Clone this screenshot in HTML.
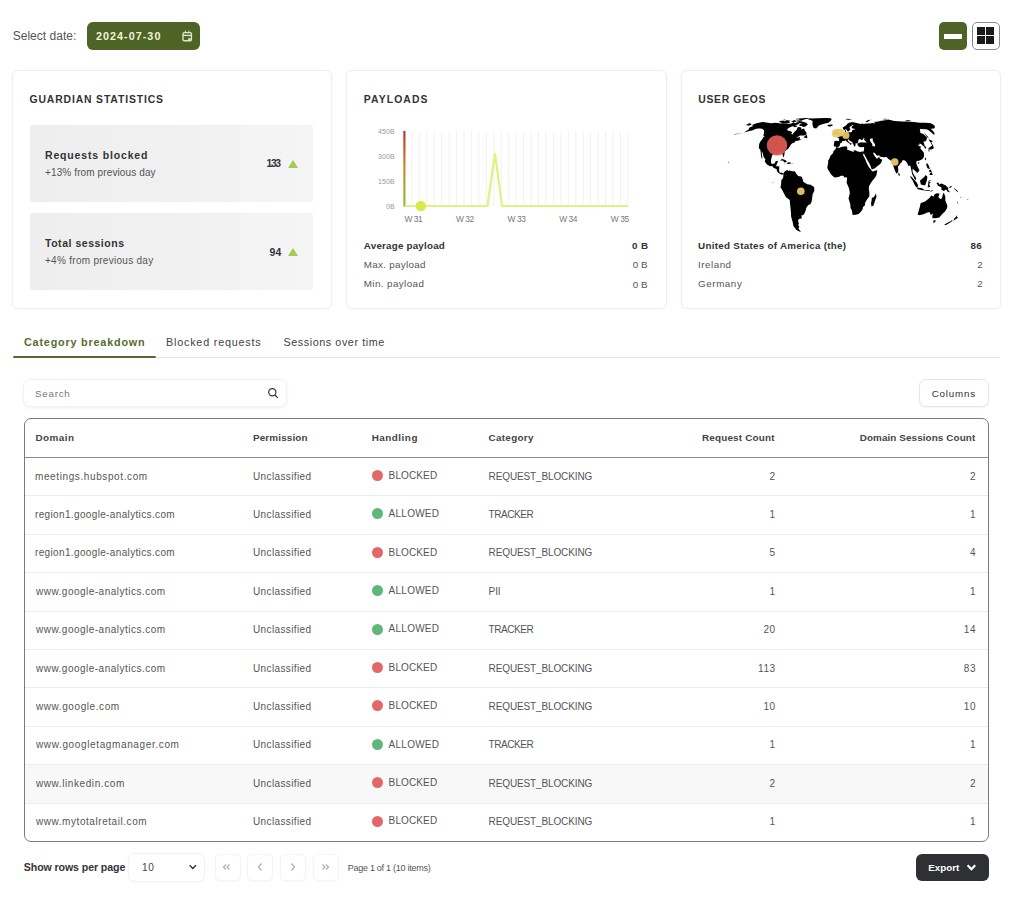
<!DOCTYPE html>
<html>
<head>
<meta charset="utf-8">
<title>Dashboard</title>
<style>
html,body{margin:0;padding:0;background:#fff;width:1024px;height:914px;overflow:hidden;position:relative;font-family:"Liberation Sans", sans-serif;}
.t{position:absolute;white-space:nowrap;line-height:20px;height:20px;}
.abs{position:absolute;box-sizing:border-box;}
.datebtn{left:87px;top:22px;width:113px;height:28px;background:#4e6426;border-radius:6px;}
.vbtn1{left:939px;top:22px;width:27.5px;height:27.5px;background:#4e6426;border-radius:5px;}
.vbtn1 i{position:absolute;left:5px;top:11.5px;width:18px;height:5.5px;background:#fff;}
.vbtn2{left:972px;top:22px;width:27.5px;height:27.5px;border:1.3px solid #8a8a8a;border-radius:5px;background:#fff;}
.vbtn2 i{position:absolute;width:8px;height:8px;background:#1a1a1a;}
.card{top:69.5px;height:239px;border:1px solid #efefef;border-radius:6px;background:#fff;box-shadow:0 0 2px 1px rgba(0,0,0,0.025);}
.stat{left:30px;width:283px;height:77px;background:linear-gradient(90deg,#eeeeee 0%,#f1f1f1 55%,#f5f5f5 100%);border-radius:2px;}
.tri{position:absolute;width:0;height:0;border-left:5.5px solid transparent;border-right:5.5px solid transparent;border-bottom:8px solid #a3cb55;}
.tabline{left:156px;top:356.5px;width:844px;height:1px;background:#e6e6e6;}
.tabact{left:13px;top:355.5px;width:143px;height:2.5px;background:#556b2f;border-radius:1px;}
.search{left:23px;top:379px;width:264px;height:28px;border:1px solid #f1f1f1;border-radius:7px;box-shadow:0 1px 3px rgba(0,0,0,0.06);background:#fff;}
.colbtn{left:918.5px;top:379px;width:70px;height:28px;border:1px solid #e6e6e6;border-radius:7px;box-shadow:0 1px 2px rgba(0,0,0,0.05);background:#fff;}
.table{left:24px;top:418px;width:965px;height:424px;border:1.2px solid #7a7a7a;border-radius:7px;background:#fff;overflow:hidden;}
.hsep{left:25px;top:456.5px;width:963px;height:1.2px;background:#8a8a8a;}
.rsep{position:absolute;left:25px;width:963px;height:1px;background:#ececec;}
.hover{left:25px;top:764.5px;width:963px;height:38px;background:#f8f8f8;}
.dot{position:absolute;left:371.8px;width:11px;height:11px;border-radius:50%;}
.dot.red{background:#e26868;}
.dot.grn{background:#5fb77a;}
.sel{left:128px;top:853px;width:77px;height:29px;border:1px solid #f3f3f3;border-radius:7px;box-shadow:0 1px 3px rgba(0,0,0,0.04);background:#fff;}
.pbtn{top:853.5px;width:26px;height:27px;border:1px solid #f4f4f4;border-radius:5px;box-shadow:0 1px 2px rgba(0,0,0,0.03);background:#fff;}
.export{left:916px;top:853.5px;width:72.5px;height:27px;background:#2e3033;border-radius:6px;}
svg{position:absolute;left:0;top:0;overflow:visible;}
</style>
</head>
<body>
<div class="abs datebtn"></div>
<svg width="1024" height="914" style="pointer-events:none">
  <!-- calendar icon -->
  <g fill="none" stroke="#dfe9c0" stroke-width="1.4">
    <rect x="183" y="32.6" width="8.4" height="8.1" rx="1.3"/>
    <line x1="183" y1="35.4" x2="191.4" y2="35.4"/>
    <line x1="185.4" y1="30.6" x2="185.4" y2="32.4" stroke-width="1"/>
    <line x1="188.9" y1="30.6" x2="188.9" y2="32.4" stroke-width="1"/>
  </g>
  <rect x="188.1" y="38.2" width="2.6" height="2" fill="#dfe9c0"/>
</svg>
<div class="abs vbtn1"><i></i></div>
<div class="abs vbtn2"><i style="left:3.6px;top:3.6px"></i><i style="left:13.2px;top:3.6px"></i><i style="left:3.6px;top:13.2px"></i><i style="left:13.2px;top:13.2px"></i></div>

<div class="abs card" style="left:11.5px;width:320.5px"></div>
<div class="abs card" style="left:346px;width:320.5px"></div>
<div class="abs card" style="left:680.8px;width:320px"></div>

<div class="abs stat" style="top:125px"></div>
<div class="abs stat" style="top:212.5px"></div>
<div class="tri" style="left:288px;top:159.5px"></div>
<div class="tri" style="left:288px;top:248px"></div>

<svg width="1024" height="914">
  <defs>
    <linearGradient id="axg" gradientUnits="userSpaceOnUse" x1="0" y1="131" x2="0" y2="206">
      <stop offset="0" stop-color="#b03a2e"/>
      <stop offset="0.45" stop-color="#c9862f"/>
      <stop offset="1" stop-color="#8cc43c"/>
    </linearGradient>
  </defs>
  <line x1="411.8" y1="131" x2="411.8" y2="206" stroke="#f2f2f2" stroke-width="1"/><line x1="419.3" y1="131" x2="419.3" y2="206" stroke="#f2f2f2" stroke-width="1"/><line x1="426.8" y1="131" x2="426.8" y2="206" stroke="#f2f2f2" stroke-width="1"/><line x1="434.2" y1="131" x2="434.2" y2="206" stroke="#f2f2f2" stroke-width="1"/><line x1="441.6" y1="131" x2="441.6" y2="206" stroke="#f2f2f2" stroke-width="1"/><line x1="449.1" y1="131" x2="449.1" y2="206" stroke="#f2f2f2" stroke-width="1"/><line x1="456.5" y1="131" x2="456.5" y2="206" stroke="#f2f2f2" stroke-width="1"/><line x1="464.0" y1="131" x2="464.0" y2="206" stroke="#f2f2f2" stroke-width="1"/><line x1="471.4" y1="131" x2="471.4" y2="206" stroke="#f2f2f2" stroke-width="1"/><line x1="478.9" y1="131" x2="478.9" y2="206" stroke="#f2f2f2" stroke-width="1"/><line x1="486.3" y1="131" x2="486.3" y2="206" stroke="#f2f2f2" stroke-width="1"/><line x1="493.8" y1="131" x2="493.8" y2="206" stroke="#f2f2f2" stroke-width="1"/><line x1="501.2" y1="131" x2="501.2" y2="206" stroke="#f2f2f2" stroke-width="1"/><line x1="508.7" y1="131" x2="508.7" y2="206" stroke="#f2f2f2" stroke-width="1"/><line x1="516.1" y1="131" x2="516.1" y2="206" stroke="#f2f2f2" stroke-width="1"/><line x1="523.6" y1="131" x2="523.6" y2="206" stroke="#f2f2f2" stroke-width="1"/><line x1="531.0" y1="131" x2="531.0" y2="206" stroke="#f2f2f2" stroke-width="1"/><line x1="538.5" y1="131" x2="538.5" y2="206" stroke="#f2f2f2" stroke-width="1"/><line x1="546.0" y1="131" x2="546.0" y2="206" stroke="#f2f2f2" stroke-width="1"/><line x1="553.4" y1="131" x2="553.4" y2="206" stroke="#f2f2f2" stroke-width="1"/><line x1="560.9" y1="131" x2="560.9" y2="206" stroke="#f2f2f2" stroke-width="1"/><line x1="568.3" y1="131" x2="568.3" y2="206" stroke="#f2f2f2" stroke-width="1"/><line x1="575.8" y1="131" x2="575.8" y2="206" stroke="#f2f2f2" stroke-width="1"/><line x1="583.2" y1="131" x2="583.2" y2="206" stroke="#f2f2f2" stroke-width="1"/><line x1="590.6" y1="131" x2="590.6" y2="206" stroke="#f2f2f2" stroke-width="1"/><line x1="598.1" y1="131" x2="598.1" y2="206" stroke="#f2f2f2" stroke-width="1"/><line x1="605.5" y1="131" x2="605.5" y2="206" stroke="#f2f2f2" stroke-width="1"/><line x1="613.0" y1="131" x2="613.0" y2="206" stroke="#f2f2f2" stroke-width="1"/><line x1="620.5" y1="131" x2="620.5" y2="206" stroke="#f2f2f2" stroke-width="1"/><line x1="627.9" y1="131" x2="627.9" y2="206" stroke="#f2f2f2" stroke-width="1"/>
  <line x1="404.4" y1="131" x2="404.4" y2="206.5" stroke="url(#axg)" stroke-width="2.2"/>
  <polyline points="405,206 487.5,206 495,153.5 502,206 628,206" fill="none" stroke="#e1f182" stroke-width="2.2" stroke-linejoin="miter"/>
  <circle cx="420.8" cy="206" r="5.2" fill="#d7ec4a"/>
  <path d="M752.1,125.1 L755.6,123.6 L759.9,122.6 L762.8,122.1 L764.8,122.3 L766.4,122.6 L769.3,122.9 L771.4,123.3 L775.1,122.7 L777.3,123.0 L780.7,123.5 L783.9,123.8 L788.7,124.0 L791.3,123.5 L793.8,122.0 L794.6,123.3 L797.6,122.7 L799.1,123.0 L799.0,123.8 L797.8,124.6 L795.2,125.2 L794.0,126.1 L791.9,126.4 L788.4,127.9 L787.2,129.4 L787.5,130.6 L789.6,131.0 L792.1,132.0 L791.3,133.9 L792.4,134.6 L793.9,132.4 L796.5,129.9 L797.8,127.1 L800.4,127.3 L801.6,127.9 L801.0,129.4 L804.1,128.4 L804.9,130.6 L806.0,132.0 L806.8,134.1 L804.4,135.4 L800.0,135.6 L795.9,138.1 L800.1,136.9 L799.6,138.9 L801.7,139.3 L798.0,140.7 L795.4,141.0 L794.6,142.4 L791.9,143.5 L790.2,145.6 L788.7,148.3 L784.7,151.4 L784.3,155.6 L783.5,157.4 L782.6,155.1 L782.2,152.8 L778.8,152.6 L777.8,153.7 L775.2,153.2 L772.3,155.1 L771.3,158.4 L770.9,161.2 L771.2,163.2 L772.2,163.9 L774.8,163.3 L775.6,161.2 L778.2,160.8 L776.8,164.1 L776.1,166.2 L779.3,166.2 L779.1,170.9 L780.0,172.9 L781.9,172.4 L783.3,173.4 L783.4,174.1 L782.9,174.6 L781.0,174.6 L779.3,173.6 L777.4,171.9 L776.4,169.0 L773.7,168.0 L772.2,166.1 L770.0,166.2 L767.0,164.6 L764.8,161.7 L765.4,159.3 L763.6,157.0 L762.6,152.8 L761.7,151.2 L761.9,153.7 L762.3,158.4 L762.2,159.3 L761.3,157.4 L760.9,154.6 L760.8,153.0 L760.4,150.5 L760.1,149.2 L758.9,148.6 L758.9,146.1 L759.4,143.6 L760.4,141.4 L762.6,138.7 L763.4,137.0 L764.8,136.5 L763.3,135.4 L764.1,132.4 L764.1,130.6 L763.0,129.6 L762.2,128.8 L759.9,128.4 L758.0,128.6 L755.4,129.1 L752.2,130.6 L749.4,131.0 L745.9,132.0 L743.9,132.5 L748.6,129.6 L749.0,128.7 L749.0,128.0 L750.6,127.0 L752.9,126.2 L752.7,125.8Z M808.1,124.3 L805.5,126.4 L803.3,127.0 L801.7,126.1 L799.0,125.8 L800.0,124.0 L802.8,123.8 L798.9,123.0 L797.5,122.8 L795.8,122.0 L799.6,121.1 L802.1,121.6 L804.4,122.3 L806.6,122.7 L806.9,123.8Z M781.5,122.0 L783.5,121.2 L786.1,121.1 L789.0,121.1 L789.4,121.6 L789.9,122.5 L788.8,123.3 L786.4,123.4 L782.7,123.5 L780.9,123.1Z M778.5,121.9 L780.8,120.8 L783.8,120.7 L784.4,121.1 L781.7,121.9 L779.3,122.3Z M803.1,119.9 L798.4,119.9 L800.2,119.1 L799.6,118.4 L805.3,118.1 L811.5,118.1 L806.3,118.9 L804.0,119.4Z M801.9,120.7 L796.7,120.6 L796.7,120.0 L800.3,119.9 L802.5,120.0Z M793.5,121.9 L790.9,121.6 L792.1,120.9 L795.1,120.8 L796.8,121.0 L795.8,121.8Z M784.8,120.3 L786.2,119.9 L790.8,120.0 L789.7,120.5 L786.6,120.7Z M807.8,119.3 L810.7,118.5 L816.8,118.2 L825.4,118.0 L831.0,118.3 L831.6,119.7 L829.7,121.8 L828.5,122.7 L823.7,123.8 L818.9,125.5 L816.2,128.6 L813.7,127.9 L812.6,125.5 L812.4,123.0 L812.7,120.9 L810.4,120.1Z M827.4,125.2 L828.6,124.7 L832.2,124.6 L832.9,125.5 L830.4,126.4 L828.0,126.2Z M779.7,160.4 L782.0,159.1 L785.4,160.1 L787.0,162.0 L784.6,162.4 L782.8,160.6 L780.4,160.4Z M786.6,163.6 L788.2,162.3 L790.7,162.5 L790.9,163.6 L788.3,164.0Z M783.8,163.7 L785.3,163.9 L784.8,164.3 L784.0,163.9Z M791.8,163.6 L792.9,163.7 L792.7,164.1 L791.7,164.1Z M783.5,173.3 L784.9,171.2 L787.6,169.7 L788.0,170.9 L789.2,170.4 L791.9,171.3 L794.8,171.2 L796.1,173.4 L798.2,175.9 L801.8,176.8 L802.9,180.0 L803.2,181.8 L804.7,182.8 L807.3,184.3 L810.6,184.8 L814.1,186.9 L814.4,190.7 L812.7,194.1 L812.0,199.0 L811.5,201.9 L810.3,204.3 L808.3,205.0 L806.2,208.0 L805.6,210.8 L804.4,213.5 L803.1,215.3 L801.4,215.3 L801.8,218.4 L799.3,218.8 L797.9,220.5 L799.0,223.9 L797.9,225.1 L799.3,226.3 L798.5,228.6 L799.5,230.1 L801.0,231.8 L799.3,231.6 L796.5,230.1 L793.5,226.3 L792.7,222.2 L791.2,217.1 L790.8,210.8 L790.1,204.3 L789.7,200.0 L785.8,197.1 L784.0,193.6 L781.8,189.2 L780.4,187.2 L781.0,185.3 L781.2,182.8 L781.3,180.3 L783.1,178.0 L783.4,174.6Z M836.1,147.6 L839.3,147.7 L842.0,146.7 L846.6,146.3 L847.4,148.3 L846.9,149.4 L850.2,150.7 L853.7,152.1 L853.6,150.5 L855.3,150.3 L857.1,151.2 L859.9,152.0 L862.1,151.6 L863.5,151.6 L864.1,153.3 L863.2,154.6 L862.4,152.9 L863.3,155.6 L865.1,158.9 L866.6,162.7 L867.7,165.1 L868.8,167.0 L870.1,168.5 L871.5,170.3 L872.5,171.5 L875.7,170.6 L877.3,170.2 L877.2,171.5 L876.3,175.4 L874.9,177.8 L872.4,180.8 L870.5,183.6 L869.0,186.3 L868.8,189.2 L869.4,192.2 L869.3,196.6 L867.3,199.0 L865.1,202.8 L865.0,205.2 L863.0,206.9 L862.5,209.4 L860.9,211.7 L858.6,214.0 L856.9,214.4 L853.4,215.1 L852.3,214.4 L852.3,212.6 L851.7,209.9 L850.5,208.0 L850.3,204.3 L849.0,200.0 L848.5,198.5 L849.8,193.6 L849.5,190.7 L848.8,187.7 L846.6,182.8 L847.0,179.3 L847.1,177.8 L846.2,177.3 L844.4,177.5 L843.3,175.7 L841.1,175.8 L838.5,177.0 L834.5,177.4 L831.6,175.1 L830.1,172.9 L829.1,170.9 L827.9,169.5 L827.3,167.3 L828.2,162.7 L828.1,160.8 L829.4,158.4 L830.6,155.6 L833.1,153.3 L833.3,151.4 L835.4,149.2Z M875.9,193.6 L876.5,197.1 L875.6,199.0 L873.4,205.7 L871.5,206.6 L871.0,203.3 L871.7,200.0 L871.7,198.0 L874.0,197.1Z M834.0,146.5 L833.8,144.8 L834.4,141.4 L834.9,140.8 L838.9,141.0 L839.2,138.9 L838.5,137.9 L837.1,137.0 L839.1,136.8 L840.9,135.7 L842.4,134.8 L843.0,133.5 L844.7,133.0 L845.0,131.7 L844.7,130.6 L845.9,130.1 L846.1,132.4 L847.6,132.4 L850.5,132.2 L852.2,131.8 L852.0,130.6 L852.2,130.3 L853.5,129.7 L855.6,128.9 L852.7,128.6 L851.8,127.9 L851.6,126.7 L853.4,125.5 L852.5,125.0 L851.1,125.9 L849.7,127.0 L849.6,128.2 L850.6,128.9 L849.4,130.6 L848.1,131.7 L847.3,131.0 L846.8,129.9 L845.9,129.2 L844.5,129.9 L843.1,129.2 L842.7,127.6 L844.3,126.4 L846.3,125.2 L847.4,123.8 L849.0,122.7 L851.4,122.3 L853.8,122.3 L855.5,122.7 L856.6,123.1 L860.9,123.9 L862.3,123.5 L863.5,123.9 L866.9,123.5 L869.9,123.5 L872.6,123.0 L875.0,123.5 L874.0,121.6 L876.1,122.3 L876.5,121.6 L878.9,121.6 L879.5,121.1 L881.5,120.7 L886.7,119.9 L888.1,119.5 L894.4,121.1 L898.0,121.3 L902.7,121.6 L908.1,121.6 L913.7,122.0 L919.9,122.7 L924.8,122.7 L929.3,123.0 L930.9,123.3 L934.7,125.5 L934.2,125.8 L935.1,127.0 L934.2,128.6 L930.6,128.8 L932.1,129.9 L933.3,131.3 L934.6,133.5 L934.2,135.0 L929.0,130.6 L927.2,129.6 L925.1,129.2 L919.8,129.0 L920.2,131.0 L920.3,132.7 L923.2,133.9 L926.6,136.9 L927.0,138.1 L926.1,141.1 L923.4,141.8 L924.1,143.5 L924.5,145.2 L926.3,147.4 L925.5,148.7 L924.9,148.3 L923.9,146.3 L922.5,145.6 L921.2,143.9 L919.3,143.5 L919.7,144.8 L917.4,144.8 L920.0,146.5 L921.3,146.5 L920.2,148.3 L922.5,151.0 L923.9,152.8 L924.0,156.5 L922.6,158.9 L920.2,160.3 L918.2,161.0 L916.8,160.8 L916.2,162.7 L916.7,165.1 L919.3,170.0 L919.4,170.4 L917.8,172.4 L916.7,173.2 L916.7,171.9 L915.1,170.9 L913.4,169.2 L912.6,168.5 L912.6,171.9 L914.0,174.9 L916.0,177.8 L916.1,180.3 L914.6,179.3 L913.8,177.3 L912.1,173.9 L911.3,170.0 L910.3,165.6 L908.2,166.1 L907.3,163.2 L905.4,160.8 L903.9,160.3 L902.5,160.3 L901.8,162.2 L900.8,162.7 L899.4,165.1 L898.0,166.5 L898.3,170.9 L898.0,171.9 L896.7,173.8 L895.5,171.9 L894.0,168.0 L892.4,163.6 L891.8,161.2 L889.6,159.8 L888.4,158.9 L886.6,157.1 L883.5,157.3 L880.3,156.7 L879.3,155.4 L876.9,155.6 L874.4,152.8 L873.0,152.8 L873.7,154.6 L875.0,156.5 L875.8,157.4 L876.3,158.4 L878.0,158.2 L879.2,156.5 L879.8,158.4 L882.2,159.8 L881.4,162.2 L880.8,163.3 L879.6,164.6 L877.5,166.1 L875.2,168.0 L872.7,169.2 L871.6,169.3 L870.9,167.0 L869.4,163.6 L867.7,160.8 L866.0,157.4 L864.3,154.6 L864.1,153.3 L863.6,151.4 L864.0,149.6 L864.2,148.3 L864.0,147.0 L861.3,147.2 L859.3,147.0 L857.8,145.6 L857.3,143.9 L858.8,143.1 L858.1,142.6 L857.2,143.5 L855.6,143.2 L855.5,145.6 L854.6,147.0 L853.8,145.2 L852.7,143.5 L852.5,142.2 L850.2,141.0 L848.5,139.3 L847.7,139.6 L847.9,140.5 L849.0,142.2 L850.4,143.1 L852.0,143.7 L850.8,144.8 L850.4,145.6 L850.2,143.9 L849.1,143.2 L847.7,142.4 L846.7,141.4 L845.7,140.3 L844.5,140.9 L842.9,141.0 L841.9,141.4 L842.1,142.4 L840.6,143.1 L839.8,144.3 L840.0,145.2 L838.7,146.7 L836.3,147.4 L835.7,146.5Z M836.5,135.7 L840.9,134.8 L841.0,133.7 L840.0,133.1 L839.1,131.7 L838.9,130.2 L838.0,129.5 L837.2,129.5 L836.5,130.7 L837.1,132.0 L838.2,132.5 L837.3,133.3 L837.0,134.2 L838.2,134.7Z M836.4,134.1 L836.5,133.1 L836.8,132.0 L835.7,131.8 L834.1,132.7 L833.9,134.4 L835.2,134.6Z M898.4,172.1 L899.9,174.4 L899.4,175.9 L898.7,175.7 L898.4,173.9Z M925.2,157.2 L926.3,159.3 L925.7,160.3 L924.7,158.9Z M917.7,163.0 L918.9,162.1 L919.4,162.6 L918.6,163.9Z M929.4,151.9 L929.1,149.6 L931.3,149.6 L933.9,148.3 L933.0,145.6 L931.4,142.6 L930.7,143.1 L932.2,145.6 L930.9,146.5 L929.0,147.8 L928.2,149.2Z M930.1,142.2 L928.6,139.3 L932.7,141.0 L932.0,142.2Z M928.9,138.9 L927.8,136.5 L923.3,132.5 L925.4,135.0Z M926.1,163.6 L927.9,163.8 L930.1,169.0 L927.8,168.5 L926.8,167.0Z M929.4,174.9 L932.7,174.9 L931.7,172.1 L930.0,173.4Z M928.9,170.4 L930.5,169.5 L931.9,171.4 L929.9,172.4Z M920.2,180.3 L921.6,179.3 L924.4,176.8 L925.7,174.9 L927.4,176.8 L926.8,180.8 L925.2,185.3 L923.8,185.3 L920.9,184.6 L920.2,181.8Z M909.9,176.3 L911.6,176.7 L913.9,179.6 L916.5,182.3 L917.9,184.8 L917.7,187.6 L916.7,187.6 L915.1,185.8 L913.9,183.3 L912.5,180.2 L911.3,178.6Z M917.0,188.4 L917.8,187.6 L919.4,187.9 L921.0,188.1 L922.5,188.6 L923.9,189.2 L923.7,190.4 L921.2,190.0 L919.1,189.5 L917.6,189.1Z M924.1,190.1 L927.1,189.9 L930.0,190.0 L929.9,190.7 L927.0,190.7 L924.1,190.6Z M930.6,190.9 L932.9,190.1 L932.9,190.5 L930.5,191.9Z M927.7,187.2 L928.6,180.8 L931.9,180.3 L929.0,181.8 L930.8,182.8 L929.0,183.8 L930.3,186.8 L928.4,187.2Z M936.3,183.0 L937.8,182.5 L938.7,182.8 L939.2,184.8 L940.0,184.1 L941.5,183.5 L943.6,184.4 L945.8,185.6 L947.0,186.8 L948.3,187.8 L948.4,188.6 L947.9,189.3 L948.4,190.3 L949.1,191.3 L950.1,192.0 L949.4,192.3 L947.7,191.8 L946.8,190.2 L945.7,189.4 L944.8,190.3 L944.2,190.9 L943.1,190.8 L941.9,189.8 L941.1,190.0 L941.6,188.5 L941.3,187.2 L939.3,186.2 L937.9,185.7 L937.2,184.8 L937.8,184.2 L936.7,183.5Z M920.6,203.3 L919.8,207.1 L917.6,214.4 L919.2,215.3 L923.4,214.2 L928.1,212.3 L929.8,212.2 L930.7,215.1 L933.2,213.5 L932.3,215.9 L932.4,217.9 L934.8,218.2 L937.0,218.0 L939.3,217.5 L942.7,213.5 L944.8,211.7 L946.6,209.0 L947.5,206.2 L946.6,203.8 L945.3,200.4 L945.3,196.6 L944.3,194.1 L943.9,192.5 L942.8,194.6 L941.9,198.5 L940.3,199.0 L938.3,197.1 L939.7,193.6 L938.6,193.6 L936.5,193.2 L934.4,194.6 L933.7,196.6 L931.3,195.6 L929.4,198.0 L927.6,199.5 L925.0,201.4 L923.0,202.2Z M933.8,220.3 L936.1,220.5 L934.5,222.4 L932.9,222.7Z M956.2,214.9 L956.5,216.2 L958.0,217.7 L955.7,219.3 L953.0,221.0 L954.1,219.3 L954.0,218.8 L955.8,217.1Z M952.2,220.1 L952.4,221.1 L950.2,222.6 L947.4,224.3 L945.3,225.2 L944.2,224.7 L947.0,223.1 L950.5,221.2Z M845.1,119.2 L847.3,118.8 L850.0,118.9 L852.4,119.2 L848.8,119.7 L846.5,119.6Z M865.5,122.0 L866.5,121.1 L868.2,120.1 L871.6,119.7 L869.4,120.5 L867.9,121.8 L866.7,122.3Z M882.5,119.1 L885.2,118.7 L888.0,119.1 L885.2,119.4Z M905.3,120.7 L906.7,120.1 L911.1,120.5 L909.6,121.0Z M728.6,161.9 L729.3,162.7 L728.4,163.3 L728.5,162.4Z M727.5,160.7 L727.9,161.0 L728.4,161.6 L728.4,161.0Z M803.3,137.6 L806.8,134.5 L807.4,137.7 L806.7,138.3 L805.4,137.7Z M794.6,125.3 L796.8,125.6 L797.1,126.4 L794.8,127.2 L793.5,126.4Z M953.7,187.7 L955.0,188.9 L956.7,189.9 L957.9,191.5 L958.1,192.5 L956.9,191.5 L955.3,190.0 L954.0,188.7Z M949.0,187.2 L950.9,186.0 L951.9,186.1 L951.2,187.2 L950.0,187.9Z M957.1,201.6 L957.6,202.0 L958.4,203.6 L957.9,203.5 L957.1,202.2Z M960.5,196.6 L961.0,196.9 L961.3,198.1 L960.8,198.0Z M967.5,198.9 L968.5,198.8 L967.9,199.8 L967.3,199.6Z M772.6,182.1 L773.2,182.0 L773.2,182.8 L772.7,182.8Z M927.8,149.9 L928.4,149.2 L929.4,149.8 L929.7,151.6 L929.1,151.7Z M783.0,119.9 L784.8,119.6 L785.9,119.8 L784.0,120.2Z M792.3,120.3 L794.2,119.9 L796.3,120.1 L794.3,120.7Z M795.7,119.4 L796.5,118.7 L799.5,118.5 L800.4,118.9 L798.1,119.3Z M749.2,123.3 L750.7,123.5 L751.0,124.2 L751.7,124.7 L750.0,125.3 L748.4,125.8 L747.6,125.3 L745.6,125.3Z M743.9,132.5 L739.3,133.6 L735.4,134.4 L733.3,134.6 L735.8,134.1 L739.6,133.3Z" fill="#000" fill-rule="nonzero"/>
  <path d="M858.1,142.6 L858.2,141.0 L858.8,139.3 L860.6,138.9 L860.4,139.3 L861.2,140.1 L863.0,139.5 L863.6,138.1 L864.5,138.1 L864.0,139.7 L865.5,141.0 L866.8,142.6 L863.2,142.6 L861.2,142.2 L858.8,143.1Z M869.7,140.1 L870.5,138.5 L873.0,138.5 L872.6,140.1 L873.5,142.2 L874.9,143.9 L875.2,146.5 L872.4,146.1 L872.3,143.9 L870.9,142.2Z" fill="#fff"/>
  <circle cx="777" cy="145.4" r="10.2" fill="#dc5a52" fill-opacity="0.95"/>
  <circle cx="836" cy="133.3" r="4.3" fill="#e9ca62" fill-opacity="0.92"/>
  <circle cx="840.3" cy="132.6" r="3.9" fill="#e9ca62" fill-opacity="0.92"/>
  <circle cx="845.9" cy="135.4" r="3.6" fill="#e9ca62" fill-opacity="0.92"/>
  <circle cx="894.7" cy="162" r="3.8" fill="#e9ca62" fill-opacity="0.95"/>
  <circle cx="800.8" cy="191.3" r="3.8" fill="#e9ca62" fill-opacity="0.95"/>
</svg>

<div class="abs tabline"></div>
<div class="abs tabact"></div>
<div class="abs search"></div>
<div class="abs colbtn"></div>
<div class="abs table"></div>
<div class="abs hover"></div>
<div class="abs hsep"></div>
<div class="rsep" style="top:495.4px"></div><div class="rsep" style="top:533.8px"></div><div class="rsep" style="top:572.2px"></div><div class="rsep" style="top:610.6px"></div><div class="rsep" style="top:649.0px"></div><div class="rsep" style="top:687.4px"></div><div class="rsep" style="top:725.8px"></div><div class="rsep" style="top:764.2px"></div><div class="rsep" style="top:802.6px"></div>
<div class="dot red" style="top:470.0px"></div><div class="dot grn" style="top:508.4px"></div><div class="dot red" style="top:546.8px"></div><div class="dot grn" style="top:585.2px"></div><div class="dot grn" style="top:623.6px"></div><div class="dot red" style="top:662.0px"></div><div class="dot red" style="top:700.4px"></div><div class="dot grn" style="top:738.8px"></div><div class="dot red" style="top:777.2px"></div><div class="dot red" style="top:815.6px"></div>
<div class="abs sel"></div>
<div class="abs pbtn" style="left:214.5px"></div>
<div class="abs pbtn" style="left:247px"></div>
<div class="abs pbtn" style="left:279.5px"></div>
<div class="abs pbtn" style="left:312.5px"></div>
<div class="abs export"></div>

<svg width="1024" height="914">
  <!-- search icon -->
  <g fill="none" stroke="#333" stroke-width="1.2">
    <circle cx="272.3" cy="392.3" r="3.6"/>
    <line x1="275" y1="395" x2="277.8" y2="397.8"/>
  </g>
  <!-- select chevron -->
  <polyline points="189.6,865.2 192.8,868.4 196,865.2" fill="none" stroke="#333" stroke-width="1.4"/>
  <!-- pagination icons -->
  <g fill="none" stroke="#b0b0b0" stroke-width="1.25">
    <polyline points="226,864.5 223.5,867 226,869.5"/><polyline points="229.5,864.5 227,867 229.5,869.5"/>
    <polyline points="261.5,863.5 258.5,867 261.5,870.5"/>
    <polyline points="291.5,863.5 294.5,867 291.5,870.5"/>
    <polyline points="322.5,864.5 325,867 322.5,869.5"/><polyline points="326,864.5 328.5,867 326,869.5"/>
  </g>
  <!-- export chevron -->
  <polyline points="967.6,865.2 971.4,869.2 975.2,865.2" fill="none" stroke="#fff" stroke-width="2.2"/>
</svg>

<div class="t" style="left:12.70px;top:26px;font-size:12px;font-weight:400;color:#555;letter-spacing:0.024px">Select date:</div>
<div class="t" style="left:95.90px;top:26px;font-size:10.8px;font-weight:700;color:#eef3d8;letter-spacing:1.031px">2024-07-30</div>
<div class="t" style="left:29.50px;top:90px;font-size:10.4px;font-weight:700;color:#333;letter-spacing:0.860px">GUARDIAN STATISTICS</div>
<div class="t" style="left:363.80px;top:90px;font-size:10.4px;font-weight:700;color:#333;letter-spacing:1.089px">PAYLOADS</div>
<div class="t" style="left:698.30px;top:90px;font-size:10.4px;font-weight:700;color:#333;letter-spacing:0.656px">USER GEOS</div>
<div class="t" style="left:45.00px;top:145px;font-size:10.5px;font-weight:700;color:#333;letter-spacing:0.837px">Requests blocked</div>
<div class="t" style="left:45.00px;top:163px;font-size:10px;font-weight:400;color:#555;letter-spacing:0.119px">+13% from previous day</div>
<div class="t" style="left:266.60px;top:154px;font-size:10.3px;font-weight:700;color:#333;letter-spacing:-1.427px">133</div>
<div class="t" style="left:45.00px;top:233px;font-size:10.5px;font-weight:700;color:#333;letter-spacing:0.529px">Total sessions</div>
<div class="t" style="left:45.00px;top:251px;font-size:10px;font-weight:400;color:#555;letter-spacing:0.283px">+4% from previous day</div>
<div class="t" style="left:269.40px;top:243px;font-size:10.4px;font-weight:700;color:#333;letter-spacing:0.221px">94</div>
<div class="t" style="left:363.80px;top:236px;font-size:9.8px;font-weight:700;color:#333;letter-spacing:0.210px">Average payload</div>
<div class="t" style="left:363.80px;top:255px;font-size:9.8px;font-weight:400;color:#555;letter-spacing:0.307px">Max. payload</div>
<div class="t" style="left:363.80px;top:274px;font-size:9.8px;font-weight:400;color:#555;letter-spacing:0.409px">Min. payload</div>
<div class="t" style="left:632.10px;top:236px;font-size:9.8px;font-weight:700;color:#333;letter-spacing:0.415px">0 B</div>
<div class="t" style="left:632.70px;top:255px;font-size:9.8px;font-weight:400;color:#555;letter-spacing:0.115px">0 B</div>
<div class="t" style="left:632.70px;top:275px;font-size:9.8px;font-weight:400;color:#555;letter-spacing:0.115px">0 B</div>
<div class="t" style="left:698.10px;top:236px;font-size:9.8px;font-weight:700;color:#333;letter-spacing:0.292px">United States of America (the)</div>
<div class="t" style="left:698.10px;top:255px;font-size:9.8px;font-weight:400;color:#555;letter-spacing:0.499px">Ireland</div>
<div class="t" style="left:698.10px;top:274px;font-size:9.8px;font-weight:400;color:#555;letter-spacing:0.568px">Germany</div>
<div class="t" style="left:970.56px;top:236px;font-size:9.8px;font-weight:700;color:#333;letter-spacing:0.292px">86</div>
<div class="t" style="left:977.30px;top:255px;font-size:9.8px;font-weight:400;color:#555;letter-spacing:0.307px">2</div>
<div class="t" style="left:977.30px;top:274px;font-size:9.8px;font-weight:400;color:#555;letter-spacing:0.307px">2</div>
<div class="t" style="left:24.00px;top:332px;font-size:10.8px;font-weight:700;color:#556b2f;letter-spacing:0.812px">Category breakdown</div>
<div class="t" style="left:166.00px;top:332px;font-size:10.8px;font-weight:400;color:#444;letter-spacing:0.792px">Blocked requests</div>
<div class="t" style="left:283.40px;top:332px;font-size:10.8px;font-weight:400;color:#444;letter-spacing:0.570px">Sessions over time</div>
<div class="t" style="left:35.00px;top:384px;font-size:9.8px;font-weight:400;color:#777;letter-spacing:0.742px">Search</div>
<div class="t" style="left:931.70px;top:384px;font-size:9.8px;font-weight:400;color:#333;letter-spacing:0.807px">Columns</div>
<div class="t" style="left:35.50px;top:428px;font-size:9.9px;font-weight:700;color:#444;letter-spacing:0.464px">Domain</div>
<div class="t" style="left:253.00px;top:428px;font-size:9.9px;font-weight:700;color:#444;letter-spacing:0.144px">Permission</div>
<div class="t" style="left:371.70px;top:428px;font-size:9.9px;font-weight:700;color:#444;letter-spacing:0.499px">Handling</div>
<div class="t" style="left:488.60px;top:428px;font-size:9.9px;font-weight:700;color:#444;letter-spacing:0.284px">Category</div>
<div class="t" style="left:701.90px;top:428px;font-size:9.9px;font-weight:700;color:#444;letter-spacing:0.206px">Request Count</div>
<div class="t" style="left:859.70px;top:428px;font-size:9.9px;font-weight:700;color:#444;letter-spacing:0.096px">Domain Sessions Count</div>
<div class="t" style="left:35.00px;top:467px;font-size:10px;font-weight:400;color:#555;letter-spacing:0.606px">meetings.hubspot.com</div>
<div class="t" style="left:253.00px;top:467px;font-size:10px;font-weight:400;color:#555;letter-spacing:0.377px">Unclassified</div>
<div class="t" style="left:388.60px;top:466px;font-size:10px;font-weight:400;color:#555;letter-spacing:0.121px">BLOCKED</div>
<div class="t" style="left:488.60px;top:467px;font-size:10px;font-weight:400;color:#555;letter-spacing:-0.127px">REQUEST_BLOCKING</div>
<div class="t" style="left:769.60px;top:467px;font-size:10px;font-weight:400;color:#555;letter-spacing:0.606px">2</div>
<div class="t" style="left:970.00px;top:467px;font-size:10px;font-weight:400;color:#555;letter-spacing:0.606px">2</div>
<div class="t" style="left:35.00px;top:505px;font-size:10px;font-weight:400;color:#555;letter-spacing:0.354px">region1.google-analytics.com</div>
<div class="t" style="left:253.00px;top:505px;font-size:10px;font-weight:400;color:#555;letter-spacing:0.377px">Unclassified</div>
<div class="t" style="left:388.60px;top:504px;font-size:10px;font-weight:400;color:#555;letter-spacing:0.253px">ALLOWED</div>
<div class="t" style="left:488.60px;top:505px;font-size:10px;font-weight:400;color:#555;letter-spacing:-0.444px">TRACKER</div>
<div class="t" style="left:769.60px;top:505px;font-size:10px;font-weight:400;color:#555;letter-spacing:0.606px">1</div>
<div class="t" style="left:970.00px;top:505px;font-size:10px;font-weight:400;color:#555;letter-spacing:0.606px">1</div>
<div class="t" style="left:35.00px;top:543px;font-size:10px;font-weight:400;color:#555;letter-spacing:0.354px">region1.google-analytics.com</div>
<div class="t" style="left:253.00px;top:543px;font-size:10px;font-weight:400;color:#555;letter-spacing:0.377px">Unclassified</div>
<div class="t" style="left:388.60px;top:543px;font-size:10px;font-weight:400;color:#555;letter-spacing:0.121px">BLOCKED</div>
<div class="t" style="left:488.60px;top:543px;font-size:10px;font-weight:400;color:#555;letter-spacing:-0.127px">REQUEST_BLOCKING</div>
<div class="t" style="left:769.60px;top:543px;font-size:10px;font-weight:400;color:#555;letter-spacing:0.606px">5</div>
<div class="t" style="left:970.00px;top:543px;font-size:10px;font-weight:400;color:#555;letter-spacing:0.606px">4</div>
<div class="t" style="left:36.00px;top:582px;font-size:10px;font-weight:400;color:#555;letter-spacing:0.487px">www.google-analytics.com</div>
<div class="t" style="left:253.00px;top:582px;font-size:10px;font-weight:400;color:#555;letter-spacing:0.377px">Unclassified</div>
<div class="t" style="left:388.60px;top:581px;font-size:10px;font-weight:400;color:#555;letter-spacing:0.253px">ALLOWED</div>
<div class="t" style="left:488.60px;top:582px;font-size:10px;font-weight:400;color:#555;letter-spacing:-0.124px">PII</div>
<div class="t" style="left:769.60px;top:582px;font-size:10px;font-weight:400;color:#555;letter-spacing:0.606px">1</div>
<div class="t" style="left:970.00px;top:582px;font-size:10px;font-weight:400;color:#555;letter-spacing:0.606px">1</div>
<div class="t" style="left:36.00px;top:620px;font-size:10px;font-weight:400;color:#555;letter-spacing:0.487px">www.google-analytics.com</div>
<div class="t" style="left:253.00px;top:620px;font-size:10px;font-weight:400;color:#555;letter-spacing:0.377px">Unclassified</div>
<div class="t" style="left:388.60px;top:619px;font-size:10px;font-weight:400;color:#555;letter-spacing:0.253px">ALLOWED</div>
<div class="t" style="left:488.60px;top:620px;font-size:10px;font-weight:400;color:#555;letter-spacing:-0.444px">TRACKER</div>
<div class="t" style="left:763.43px;top:620px;font-size:10px;font-weight:400;color:#555;letter-spacing:0.606px">20</div>
<div class="t" style="left:963.83px;top:620px;font-size:10px;font-weight:400;color:#555;letter-spacing:0.606px">14</div>
<div class="t" style="left:36.00px;top:659px;font-size:10px;font-weight:400;color:#555;letter-spacing:0.487px">www.google-analytics.com</div>
<div class="t" style="left:253.00px;top:659px;font-size:10px;font-weight:400;color:#555;letter-spacing:0.377px">Unclassified</div>
<div class="t" style="left:388.60px;top:658px;font-size:10px;font-weight:400;color:#555;letter-spacing:0.121px">BLOCKED</div>
<div class="t" style="left:488.60px;top:659px;font-size:10px;font-weight:400;color:#555;letter-spacing:-0.127px">REQUEST_BLOCKING</div>
<div class="t" style="left:758.01px;top:659px;font-size:10px;font-weight:400;color:#555;letter-spacing:0.606px">113</div>
<div class="t" style="left:963.83px;top:659px;font-size:10px;font-weight:400;color:#555;letter-spacing:0.606px">83</div>
<div class="t" style="left:36.00px;top:697px;font-size:10px;font-weight:400;color:#555;letter-spacing:0.580px">www.google.com</div>
<div class="t" style="left:253.00px;top:697px;font-size:10px;font-weight:400;color:#555;letter-spacing:0.377px">Unclassified</div>
<div class="t" style="left:388.60px;top:696px;font-size:10px;font-weight:400;color:#555;letter-spacing:0.121px">BLOCKED</div>
<div class="t" style="left:488.60px;top:697px;font-size:10px;font-weight:400;color:#555;letter-spacing:-0.127px">REQUEST_BLOCKING</div>
<div class="t" style="left:763.43px;top:697px;font-size:10px;font-weight:400;color:#555;letter-spacing:0.606px">10</div>
<div class="t" style="left:963.83px;top:697px;font-size:10px;font-weight:400;color:#555;letter-spacing:0.606px">10</div>
<div class="t" style="left:36.00px;top:735px;font-size:10px;font-weight:400;color:#555;letter-spacing:0.631px">www.googletagmanager.com</div>
<div class="t" style="left:253.00px;top:735px;font-size:10px;font-weight:400;color:#555;letter-spacing:0.377px">Unclassified</div>
<div class="t" style="left:388.60px;top:735px;font-size:10px;font-weight:400;color:#555;letter-spacing:0.253px">ALLOWED</div>
<div class="t" style="left:488.60px;top:735px;font-size:10px;font-weight:400;color:#555;letter-spacing:-0.444px">TRACKER</div>
<div class="t" style="left:769.60px;top:735px;font-size:10px;font-weight:400;color:#555;letter-spacing:0.606px">1</div>
<div class="t" style="left:970.00px;top:735px;font-size:10px;font-weight:400;color:#555;letter-spacing:0.606px">1</div>
<div class="t" style="left:36.00px;top:774px;font-size:10px;font-weight:400;color:#555;letter-spacing:0.584px">www.linkedin.com</div>
<div class="t" style="left:253.00px;top:774px;font-size:10px;font-weight:400;color:#555;letter-spacing:0.377px">Unclassified</div>
<div class="t" style="left:388.60px;top:773px;font-size:10px;font-weight:400;color:#555;letter-spacing:0.121px">BLOCKED</div>
<div class="t" style="left:488.60px;top:774px;font-size:10px;font-weight:400;color:#555;letter-spacing:-0.127px">REQUEST_BLOCKING</div>
<div class="t" style="left:769.60px;top:774px;font-size:10px;font-weight:400;color:#555;letter-spacing:0.606px">2</div>
<div class="t" style="left:970.00px;top:774px;font-size:10px;font-weight:400;color:#555;letter-spacing:0.606px">2</div>
<div class="t" style="left:36.00px;top:812px;font-size:10px;font-weight:400;color:#555;letter-spacing:0.556px">www.mytotalretail.com</div>
<div class="t" style="left:253.00px;top:812px;font-size:10px;font-weight:400;color:#555;letter-spacing:0.377px">Unclassified</div>
<div class="t" style="left:388.60px;top:811px;font-size:10px;font-weight:400;color:#555;letter-spacing:0.121px">BLOCKED</div>
<div class="t" style="left:488.60px;top:812px;font-size:10px;font-weight:400;color:#555;letter-spacing:-0.127px">REQUEST_BLOCKING</div>
<div class="t" style="left:769.60px;top:812px;font-size:10px;font-weight:400;color:#555;letter-spacing:0.606px">1</div>
<div class="t" style="left:970.00px;top:812px;font-size:10px;font-weight:400;color:#555;letter-spacing:0.606px">1</div>
<div class="t" style="left:23.80px;top:857px;font-size:10.6px;font-weight:700;color:#333;letter-spacing:-0.090px">Show rows per page</div>
<div class="t" style="left:142.00px;top:858px;font-size:10px;font-weight:400;color:#444;letter-spacing:0.606px">10</div>
<div class="t" style="left:347.70px;top:858px;font-size:9px;font-weight:400;color:#555;letter-spacing:-0.264px">Page 1 of 1 (10 items)</div>
<div class="t" style="left:928.30px;top:858px;font-size:9.8px;font-weight:700;color:#ffffff;letter-spacing:-0.013px">Export</div>
<div class="t" style="left:378.02px;top:122px;font-size:7px;font-weight:400;color:#999;letter-spacing:0.100px">450B</div>
<div class="t" style="left:378.02px;top:147px;font-size:7px;font-weight:400;color:#999;letter-spacing:0.100px">300B</div>
<div class="t" style="left:378.02px;top:172px;font-size:7px;font-weight:400;color:#999;letter-spacing:0.100px">150B</div>
<div class="t" style="left:386.01px;top:197px;font-size:7px;font-weight:400;color:#999;letter-spacing:0.100px">0B</div>
<div class="t" style="left:404.40px;top:209px;font-size:8.4px;font-weight:400;color:#777;letter-spacing:-0.430px">W 31</div>
<div class="t" style="left:456.00px;top:209px;font-size:8.4px;font-weight:400;color:#777;letter-spacing:-0.430px">W 32</div>
<div class="t" style="left:507.60px;top:209px;font-size:8.4px;font-weight:400;color:#777;letter-spacing:-0.430px">W 33</div>
<div class="t" style="left:559.20px;top:209px;font-size:8.4px;font-weight:400;color:#777;letter-spacing:-0.430px">W 34</div>
<div class="t" style="left:610.80px;top:209px;font-size:8.4px;font-weight:400;color:#777;letter-spacing:-0.430px">W 35</div>
</body>
</html>
